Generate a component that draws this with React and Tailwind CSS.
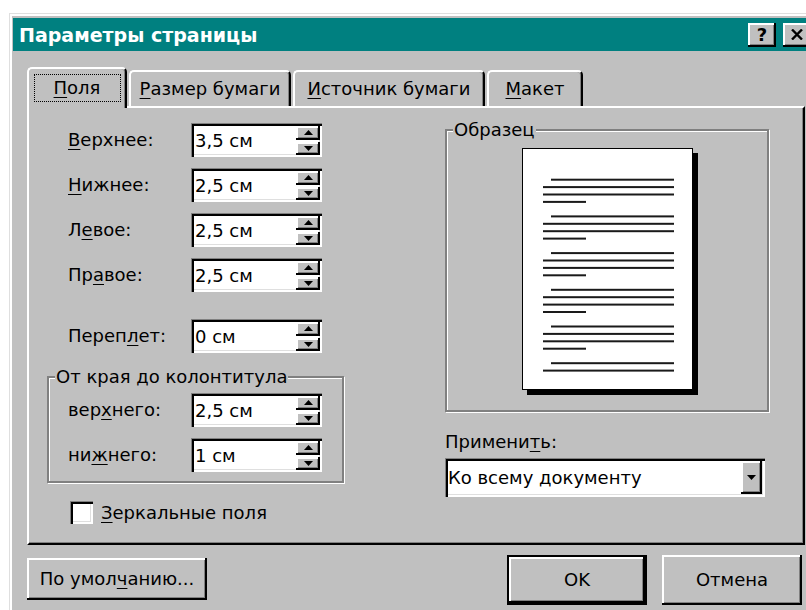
import React from "react";

// Win95-style bevels built from stacked inset shadows
const raised =
  "shadow-[inset_-2px_-2px_0_#000,inset_2px_2px_0_#fff,inset_-3px_-3px_0_#808080]";
const sunken =
  "shadow-[inset_1px_1px_0_#808080,inset_3px_3px_0_#000,inset_-2px_-2px_0_#fff,inset_-3px_-3px_0_#dfdfdf]";

function U({ children }) {
  return <span className="underline underline-offset-[3px]">{children}</span>;
}

function Arrow({ dir }) {
  return (
    <svg width="9" height="5" viewBox="0 0 9 5">
      <polygon points={dir === "up" ? "0,5 9,5 4.5,0" : "0,0 9,0 4.5,5"} fill="#000" />
    </svg>
  );
}

function Spinner({ value }) {
  return (
    <div className={`w-[131px] h-[34px] bg-white flex ${sunken} pl-[4px] pr-[2px] pt-[2px] pb-[2px]`}>
      <span className="flex-1 self-center pt-[1px]">{value}</span>
      <div className="w-[24px] flex flex-col gap-[2px] pt-[1px]">
        <div className={`flex-1 bg-[#c0c0c0] ${raised} flex items-center justify-center`}>
          <Arrow dir="up" />
        </div>
        <div className={`flex-1 bg-[#c0c0c0] ${raised} flex items-center justify-center`}>
          <Arrow dir="down" />
        </div>
      </div>
    </div>
  );
}

function Field({ label, value }) {
  return (
    <div className="flex items-center h-[34px]">
      <div className="w-[123px]">{label}</div>
      <Spinner value={value} />
    </div>
  );
}

function Tab({ children, w, active }) {
  if (active) {
    return (
      <div
        className={`${w} h-[41px] -mb-[2px] bg-[#c0c0c0] border-t-2 border-l-2 border-r-2 border-white border-r-black rounded-t-[5px] shadow-[inset_-1px_0_0_#808080] flex items-center justify-center pb-[2px]`}
      >
        {children}
      </div>
    );
  }
  return (
    <div
      className={`${w} h-[36px] bg-[#c0c0c0] border-t-2 border-l-2 border-r-2 border-white border-r-black rounded-t-[5px] shadow-[inset_-1px_0_0_#808080] flex items-center justify-center`}
    >
      {children}
    </div>
  );
}

// sample page drawing: six paragraphs of text lines
function PageLines() {
  const rects = [];
  for (let p = 0; p < 6; p++) {
    const top = 29.7 + p * 36.7;
    const count = p === 5 ? 2 : 4;
    for (let l = 0; l < count; l++) {
      const y = top + l * 7.4;
      let x1 = 20;
      let x2 = 151;
      if (l === 0) x1 = 28;
      if (l === 3) x2 = 63;
      rects.push(<rect key={`${p}-${l}`} x={x1} y={y} width={x2 - x1} height="2" fill="#1a1a1a" />);
    }
  }
  return (
    <svg width="169" height="240" viewBox="0 0 169 240">
      {rects}
    </svg>
  );
}

export default function App() {
  return (
    <div className="w-[806px] h-[610px] overflow-hidden bg-white font-['DejaVu_Sans',sans-serif] text-[18px] leading-[20px] text-black">
      <div className="ml-[9px] mt-[13px] w-[812px] h-[620px] bg-[#c0c0c0] pl-[4px] pt-[5px] shadow-[inset_1px_1px_0_#dfdfdf,inset_3px_3px_0_#fff]">
        {/* title bar */}
        <div className="h-[33px] bg-[#008080] flex items-center pl-[6px] pr-[10px]">
          <span className="text-white font-bold text-[19px]">Параметры страницы</span>
          <div className="ml-auto flex gap-[7px]">
            <div className={`w-[28px] h-[24px] bg-[#c0c0c0] ${raised} flex items-center justify-center font-bold text-[18px]`}>
              ?
            </div>
            <div className={`w-[28px] h-[24px] bg-[#c0c0c0] ${raised} flex items-center justify-center`}>
              <svg width="12" height="11" viewBox="0 0 12 11">
                <path d="M1 0.5 L11 10.5 M11 0.5 L1 10.5" stroke="#000" strokeWidth="2.4" />
              </svg>
            </div>
          </div>
        </div>

        <div className="pl-[14px] pt-[16px]">
          {/* tab strip */}
          <div className="flex items-end gap-[2px] h-[39px] relative z-10">
            <Tab w="w-[100px]" active>
              <span className="border border-dotted border-black w-[87px] h-[28px] flex items-center justify-center">
                <span>
                  <U>П</U>оля
                </span>
              </span>
            </Tab>
            <Tab w="w-[162px]">
              <span>
                <U>Р</U>азмер бумаги
              </span>
            </Tab>
            <Tab w="w-[192px]">
              <span>
                <U>И</U>сточник бумаги
              </span>
            </Tab>
            <Tab w="w-[96px]">
              <span>
                <U>М</U>акет
              </span>
            </Tab>
          </div>

          {/* tab page */}
          <div className="w-[778px] h-[439px] border-2 border-white border-r-black border-b-black shadow-[inset_-1px_-1px_0_#808080] flex">
            <div className="w-[416px] pt-[15px] pl-[18px]">
              <div className="pl-[21px] flex flex-col gap-[11px]">
                <Field label={<><U>В</U>ерхнее:</>} value="3,5 см" />
                <Field label={<><U>Н</U>ижнее:</>} value="2,5 см" />
                <Field label={<>Л<U>е</U>вое:</>} value="2,5 см" />
                <Field label={<>Пр<U>а</U>вое:</>} value="2,5 см" />
              </div>
              <div className="pl-[21px] mt-[27px]">
                <Field label={<>Переп<U>л</U>ет:</>} value="0 см" />
              </div>

              {/* header/footer distance group */}
              <div className="relative mt-[23px] w-[297px] border-2 border-[#808080] shadow-[inset_1px_1px_0_#fff,1px_1px_0_#fff] pl-[19px] pt-[15px] pb-[9px] flex flex-col gap-[11px]">
                <span className="absolute -top-[11px] left-[6px] bg-[#c0c0c0] px-[1px]">От края до колонтитула</span>
                <Field label={<>вер<U>х</U>него:</>} value="2,5 см" />
                <Field label={<>ни<U>ж</U>него:</>} value="1 см" />
              </div>

              <div className="flex items-center mt-[18px] pl-[23px] gap-[8px]">
                <div className={`w-[23px] h-[23px] bg-white ${sunken}`} />
                <span>
                  <U>З</U>еркальные поля
                </span>
              </div>
            </div>

            <div className="w-[324px] pt-[21px]">
              {/* sample preview */}
              <div className="relative w-[324px] h-[283px] border-2 border-[#808080] shadow-[inset_1px_1px_0_#fff,1px_1px_0_#fff] flex justify-center">
                <span className="absolute -top-[11px] left-[6px] bg-[#c0c0c0] px-[1px]">Образец</span>
                <div className="mt-[17px] w-[171px] h-[242px] bg-white border border-black shadow-[5px_5px_0_#000]">
                  <PageLines />
                </div>
              </div>

              <div className="mt-[20px]">
                Примени<U>т</U>ь:
              </div>
              <div className={`mt-[6px] w-[320px] h-[39px] bg-white ${sunken} flex items-stretch pl-[3px] pr-[3px] pt-[3px] pb-[3px]`}>
                <span className="flex-1 self-center pt-[1px]">Ко всему документу</span>
                <div className={`w-[21px] bg-[#c0c0c0] ${raised} flex items-center justify-center`}>
                  <Arrow dir="down" />
                </div>
              </div>
            </div>
          </div>

          {/* dialog buttons */}
          <div className="flex items-start pt-[10px]">
            <div className={`mt-[3px] w-[180px] h-[42px] ${raised} flex items-center justify-center`}>
              <span>
                По умол<U>ч</U>анию...
              </span>
            </div>
            <div className="ml-[300px] w-[140px] h-[50px] border-2 border-black">
              <div className={`w-full h-full ${raised} flex items-center justify-center`}>OK</div>
            </div>
            <div className={`ml-[15px] w-[140px] h-[50px] ${raised} flex items-center justify-center`}>Отмена</div>
          </div>
        </div>
      </div>
    </div>
  );
}
